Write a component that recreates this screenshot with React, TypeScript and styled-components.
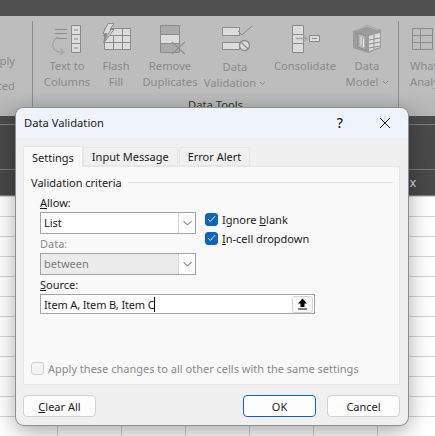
import React from "react";
import styled, { createGlobalStyle } from "styled-components";

const FONT = `"Noto Sans", "Open Sans", "Liberation Sans", sans-serif`;

const GlobalStyle = createGlobalStyle`
  html, body {
    margin: 0;
    padding: 0;
    background: #ffffff;
  }
  body {
    font-family: ${FONT};
    overflow: hidden;
  }
`;

const Page = styled.div`
  position: relative;
  width: 435px;
  height: 436px;
  overflow: hidden;
  display: flex;
  flex-direction: column;
`;

const TitleStrip = styled.div`
  height: 16px;
  background: #505050;
  flex: none;
`;

const Ribbon = styled.div`
  height: 100px;
  flex: none;
  display: flex;
  background: linear-gradient(#bdbdbd 75%, #b4b4b4 100%);
`;

const CutGroup = styled.div`
  width: 33px;
  flex: none;
  overflow: hidden;
  display: flex;
  justify-content: flex-end;
  padding-top: 27px;
  box-sizing: border-box;
  border-right: 1px solid #8c8c8c;
  margin: 5px 0 9px;
`;

const CutLabels = styled.div`
  width: 60px;
  flex: none;
  margin-right: 17px;
  text-align: right;
  font-size: 11.2px;
  line-height: 25px;
  color: #8a8a8a;
`;

const ToolsGroup = styled.div`
  position: relative;
  width: 366px;
  flex: none;
  display: flex;
  padding-left: 9px;
  box-sizing: border-box;
  border-right: 1px solid #8c8c8c;
  margin: 5px 0 9px;
`;

const ToolButton = styled.div<{ $width: number; $drop?: number }>`
  width: ${({ $width }) => $width}px;
  flex: none;
  display: flex;
  flex-direction: column;
  align-items: center;
  padding-top: 1px;
  svg {
    display: block;
    flex: none;
    margin-bottom: ${({ $drop }) => 2 + ($drop || 0)}px;
  }
`;

const ToolLabel = styled.div`
  font-size: 11.2px;
  line-height: 16px;
  color: #8a8a8a;
  white-space: nowrap;
`;

const Chevron = styled.svg`
  display: inline-block !important;
  margin: 0 0 1px 3px !important;
`;

const GroupName = styled.div`
  position: absolute;
  left: 0;
  right: 0;
  top: 76px;
  text-align: center;
  font-size: 11.2px;
  line-height: 16px;
  color: #333333;
`;

const CutRight = styled.div`
  flex: 1;
  overflow: hidden;
  padding: 6px 0 0 11px;
  svg {
    display: block;
    margin-bottom: 2px;
  }
`;

const SheetHeader = styled.div`
  height: 80px;
  flex: none;
  box-sizing: border-box;
  background: linear-gradient(#4a4a4a, #484848);
  display: flex;
  flex-direction: column;
`;

const HeaderBand = styled.div<{ $height: number }>`
  height: ${({ $height }) => $height}px;
  flex: none;
  box-sizing: border-box;
  border-bottom: 1px solid #7d7d7d;
  display: flex;
  align-items: center;
  justify-content: flex-end;
  padding-right: 19px;
  color: #d8e2ee;
  font-size: 12px;
`;

const Sheet = styled.div`
  flex: 1;
  background-color: #ffffff;
  background-image: linear-gradient(#d2d2d2 1px, transparent 1px),
    linear-gradient(90deg, #d2d2d2 1px, transparent 1px);
  background-size: 64px 20px;
  background-position: -7px 20px;
`;

const Dialog = styled.div`
  position: absolute;
  left: 16px;
  top: 108px;
  width: 392px;
  height: 317px;
  border-radius: 8px;
  background: #f0f0f0;
  box-shadow: 0 0 0 1px #8f8f8f, 0 6px 22px rgba(0, 0, 0, 0.36);
  display: flex;
  flex-direction: column;
  overflow: hidden;
  color: #1a1a1a;
  font-size: 11px;
`;

const DialogTitle = styled.div`
  height: 29px;
  flex: none;
  background: #eff3fb;
  display: flex;
  align-items: center;
  padding-left: 8px;
  font-size: 11.2px;
  color: #1c1c1c;
`;

const TitleText = styled.div`
  flex: 1;
`;

const HelpMark = styled.div`
  width: 20px;
  font-size: 14px;
  font-weight: 500;
  margin-right: 30px;
  text-align: center;
`;

const CloseMark = styled.div`
  width: 10px;
  height: 10px;
  margin-right: 18px;
  svg {
    display: block;
  }
`;

const TabRow = styled.div`
  display: flex;
  align-items: flex-end;
  height: 29px;
  flex: none;
  padding-left: 7px;
`;

const Tab = styled.div<{ $active?: boolean }>`
  box-sizing: border-box;
  height: ${({ $active }) => ($active ? 21 : 19)}px;
  padding: 0 8px;
  margin-right: ${({ $active }) => ($active ? 0 : 1)}px;
  display: flex;
  align-items: center;
  background: ${({ $active }) => ($active ? "#f9f9f9" : "#f0f0f0")};
  border: 1px solid #e6e6e6;
  border-bottom: ${({ $active }) => ($active ? "none" : "1px solid #e6e6e6")};
  border-radius: 2px 2px 0 0;
  position: relative;
  top: ${({ $active }) => ($active ? 1 : 0)}px;
  z-index: ${({ $active }) => ($active ? 1 : 0)};
`;

const Panel = styled.div`
  margin: 0 8px 0 7px;
  height: 219px;
  flex: none;
  box-sizing: border-box;
  background: #f9f9f9;
  border: 1px solid #e6e6e6;
  padding: 7px 6px 0 7px;
  display: flex;
  flex-direction: column;
`;

const Legend = styled.div`
  display: flex;
  align-items: center;
  gap: 6px;
  height: 16px;
  white-space: nowrap;
`;

const LegendRule = styled.div`
  flex: 1;
  height: 1px;
  background: #dfdfdf;
`;

const CriteriaRow = styled.div`
  display: flex;
  margin-top: 5px;
  padding-left: 9px;
`;

const CriteriaFields = styled.div`
  width: 156px;
  flex: none;
`;

const FieldLabel = styled.div<{ $dim?: boolean }>`
  height: 16px;
  line-height: 16px;
  margin-top: ${({ $dim }) => ($dim ? 2 : 0)}px;
  color: ${({ $dim }) => ($dim ? "#8a8a8a" : "#1a1a1a")};
  margin-bottom: 1px;
`;

const SelectBox = styled.div<{ $disabled?: boolean }>`
  box-sizing: border-box;
  width: 156px;
  height: 22px;
  display: flex;
  border: 1px solid #a4a4a8;
  background: ${({ $disabled }) => ($disabled ? "#ececec" : "#ffffff")};
  color: ${({ $disabled }) => ($disabled ? "#7c7c7c" : "#1a1a1a")};
`;

const SelectValue = styled.div`
  flex: 1;
  line-height: 20px;
  padding-left: 3px;
`;

const SelectCaret = styled.div`
  width: 16px;
  flex: none;
  display: flex;
  align-items: center;
  justify-content: center;
  background: #fdfdfd;
  border-left: 1px solid #d6d6d6;
`;

const CheckColumn = styled.div`
  display: flex;
  flex-direction: column;
  gap: 5px;
  padding: 17px 0 0 9px;
`;

const CheckRow = styled.div<{ $dim?: boolean }>`
  display: flex;
  align-items: center;
  gap: 4px;
  height: 14px;
  white-space: nowrap;
  color: ${({ $dim }) => ($dim ? "#8a8a8a" : "#1a1a1a")};
`;

const CheckBox = styled.div<{ $checked?: boolean }>`
  box-sizing: border-box;
  width: 13px;
  height: 13px;
  border-radius: 3px;
  flex: none;
  background: ${({ $checked }) => ($checked ? "#0a64c0" : "#f4f4f4")};
  border: 1px solid ${({ $checked }) => ($checked ? "#0a64c0" : "#cfcfcf")};
  display: flex;
  align-items: center;
  justify-content: center;
`;

const SourceBlock = styled.div`
  padding-left: 9px;
  margin-top: 2px;
`;

const SourceInput = styled.div`
  box-sizing: border-box;
  width: 275px;
  height: 20px;
  background: #ffffff;
  border: 1px solid #a4a4a8;
  display: flex;
  align-items: center;
  padding-left: 3px;
`;

const SourceText = styled.div`
  flex: 1;
  display: flex;
  align-items: center;
  white-space: nowrap;
  letter-spacing: -0.15px;
`;

const Caret = styled.span`
  width: 1px;
  height: 15px;
  background: #000000;
`;

const PickButton = styled.div`
  box-sizing: border-box;
  width: 21px;
  height: 17px;
  margin-right: 1px;
  border: 1px solid #d4d4d4;
  border-radius: 3px;
  background: #fdfdfd;
  display: flex;
  align-items: center;
  justify-content: center;
`;

const ApplyRow = styled(CheckRow)`
  margin-top: 47px;
`;

const DialogFooter = styled.div`
  display: flex;
  padding: 10px 8px 0 7px;
  gap: 11px;
`;

const Button = styled.div<{ $primary?: boolean; $push?: boolean }>`
  box-sizing: border-box;
  width: 73px;
  height: 22px;
  border-radius: 4px;
  background: #fdfdfd;
  border: 1px solid ${({ $primary }) => ($primary ? "#0a64c0" : "#d2d2d2")};
  display: flex;
  align-items: center;
  justify-content: center;
  margin-left: ${({ $push }) => ($push ? "auto" : "0")};
`;

const stroke = "#8b8b8b";
const pale = "#dcdcdc";
const mid = "#a6a6a6";

const TextToColumnsIcon = () => (
  <svg width="40" height="34" viewBox="47 22 40 34">
    <g fill="none" stroke={stroke}>
      <path d="M55 29.5h12M55 33.5h12M55 38.5h12" />
      <path d="M71.5 25.5h9v27h-9zM71.5 34.5h9M71.5 43.5h9" fill={pale} />
      <path d="M74 30h4M74 39h4M74 48h4" />
    </g>
    <path
      d="M58 37c-7 4-7 13 1 15l4 0M60 48l4 4-4 3"
      fill="none"
      stroke={mid}
      strokeWidth="1.3"
    />
  </svg>
);

const FlashFillIcon = () => (
  <svg width="40" height="34" viewBox="96 22 40 34">
    <path d="M104.5 28.5h26v21h-26z" fill={pale} stroke={stroke} />
    <path d="M103 35.5h27M103 42.5h27M113.5 35v14M122.5 28v21" stroke={stroke} fill="none" />
    <path d="M108 23.5h6l-4 6h4l-10 13 3-9h-4z" fill={pale} stroke={stroke} />
    <path d="M112 28l-8 13 2-8" fill="none" stroke={stroke} />
  </svg>
);

const RemoveDuplicatesIcon = () => (
  <svg width="40" height="34" viewBox="150 22 40 34">
    <path d="M160.5 25.5h19v9h-19z" fill="#aaaaaa" stroke={stroke} />
    <path d="M160.5 34.5h19v9h-19z" fill={pale} stroke={stroke} />
    <path d="M160.5 43.5h19v9h-19z" fill="#aaaaaa" stroke={stroke} />
    <path d="M172 42l13 12M185 42l-13 12" stroke="#8f8f8f" strokeWidth="1.1" fill="none" />
  </svg>
);

const DataValidationIcon = () => (
  <svg width="40" height="34" viewBox="215 22 40 34">
    <path d="M222.5 27.5h17v8h-17z" fill={pale} stroke={stroke} />
    <path d="M222.5 42.5h17v7h-17z" fill={pale} stroke={stroke} />
    <path d="M238 31l4 4 10-9" fill="none" stroke={stroke} />
    <circle cx="244.5" cy="45.5" r="5" fill={pale} stroke={stroke} strokeWidth="1.3" />
    <path d="M241 42l7 7" stroke={stroke} strokeWidth="1.3" />
  </svg>
);

const ConsolidateIcon = () => (
  <svg width="40" height="34" viewBox="285 22 40 34">
    <path d="M292.5 25.5h11v27h-11zM292.5 34.5h11M292.5 43.5h11" fill={pale} stroke={stroke} />
    <path d="M296 38.5h10M303 35l4 3.5-4 3.5" fill="none" stroke={mid} strokeWidth="1.3" />
    <path d="M309.5 35.5h10v6h-10z" fill={pale} stroke={stroke} />
    <path d="M312 38.5h5" stroke={stroke} />
  </svg>
);

const DataModelIcon = () => (
  <svg width="40" height="34" viewBox="347 22 40 34">
    <path d="M353 31l14-6 14 5v18l-13 5-15-5z" fill="#9c9c9c" />
    <path d="M358 33l8 3v14l-8-3z" fill="#b4b4b4" stroke="#8a8a8a" />
    <path d="M369 36l11-3v14l-11 4z" fill={pale} />
    <path d="M369 40l11-2M369 44l11-2M369 48l11-2M374 35v14" stroke="#8f8f8f" fill="none" />
    <path d="M361 37v8M363.5 39v8" stroke="#e6e6e6" />
    <path d="M356 30l11-4 11 4" stroke="#b8b8b8" fill="none" />
  </svg>
);

const WhatIfIcon = () => (
  <svg width="24" height="34" viewBox="421 22 24 34">
    <path d="M423.5 28.5h20v21h-20zM423.5 35.5h20M423.5 42.5h20M431.5 28v21" fill="none" stroke={stroke} />
  </svg>
);

const SmallCaret = () => (
  <svg width="9" height="6" viewBox="0 0 9 6">
    <path d="M0.5 1l4 4 4-4" fill="none" stroke="#5a5a5a" strokeWidth="1" />
  </svg>
);

const Tick = () => (
  <svg width="9" height="8" viewBox="0 0 9 8">
    <path d="M1 4.2l2.3 2.2L8 1.3" fill="none" stroke="#ffffff" strokeWidth="1" />
  </svg>
);

const UploadArrow = () => (
  <svg width="11" height="12" viewBox="0 0 11 12">
    <path d="M5.5 0.5L10 5.5H7.5V9h-4V5.5H1z" fill="#000000" />
    <path d="M1 11h9" stroke="#000000" strokeWidth="1.2" />
  </svg>
);

const tools = [
  { width: 50, icon: <TextToColumnsIcon />, lines: ["Text to", "Columns"] },
  { width: 48, icon: <FlashFillIcon />, lines: ["Flash", "Fill"] },
  { width: 60, icon: <RemoveDuplicatesIcon />, lines: ["Remove", "Duplicates"] },
  { width: 70, icon: <DataValidationIcon />, lines: ["Data", "Validation"], menu: true, drop: 1 },
  { width: 70, icon: <ConsolidateIcon />, lines: ["Consolidate"] },
  { width: 54, icon: <DataModelIcon />, lines: ["Data", "Model"], menu: true },
];

export default function App() {
  return (
    <>
      <GlobalStyle />
      <Page>
        <TitleStrip />
        <Ribbon>
          <CutGroup>
            <CutLabels>
              Reapply
              <br />
              Advanced
            </CutLabels>
          </CutGroup>
          <ToolsGroup>
            {tools.map((tool) => (
              <ToolButton key={tool.lines.join(" ")} $width={tool.width} $drop={tool.drop}>
                {tool.icon}
                {tool.lines.map((line, i) => (
                  <ToolLabel key={line}>
                    {line}
                    {tool.menu && i === tool.lines.length - 1 && (
                      <Chevron width="7" height="5" viewBox="0 0 7 5">
                        <path d="M1 1l2.5 2.5L6 1" fill="none" stroke="#8a8a8a" />
                      </Chevron>
                    )}
                  </ToolLabel>
                ))}
              </ToolButton>
            ))}
            <GroupName>Data Tools</GroupName>
          </ToolsGroup>
          <CutRight>
            <WhatIfIcon />
            <ToolLabel>What-If</ToolLabel>
            <ToolLabel>Analysis</ToolLabel>
          </CutRight>
        </Ribbon>
        <SheetHeader>
          <HeaderBand $height={9} />
          <HeaderBand $height={45} />
          <HeaderBand $height={26}>x</HeaderBand>
        </SheetHeader>
        <Sheet />
        <Dialog>
          <DialogTitle>
            <TitleText>Data Validation</TitleText>
            <HelpMark>?</HelpMark>
            <CloseMark>
              <svg width="10" height="10" viewBox="0 0 10 10">
                <path d="M0 0l10 10M10 0L0 10" stroke="#1a1a1a" strokeWidth="1" />
              </svg>
            </CloseMark>
          </DialogTitle>
          <TabRow>
            <Tab $active>Settings</Tab>
            <Tab>Input Message</Tab>
            <Tab>Error Alert</Tab>
          </TabRow>
          <Panel>
            <Legend>
              Validation criteria
              <LegendRule />
            </Legend>
            <CriteriaRow>
              <CriteriaFields>
                <FieldLabel>
                  <u>A</u>llow:
                </FieldLabel>
                <SelectBox>
                  <SelectValue>List</SelectValue>
                  <SelectCaret>
                    <SmallCaret />
                  </SelectCaret>
                </SelectBox>
                <FieldLabel $dim>Data:</FieldLabel>
                <SelectBox $disabled>
                  <SelectValue>between</SelectValue>
                  <SelectCaret>
                    <SmallCaret />
                  </SelectCaret>
                </SelectBox>
              </CriteriaFields>
              <CheckColumn>
                <CheckRow>
                  <CheckBox $checked>
                    <Tick />
                  </CheckBox>
                  <span>
                    Ignore <u>b</u>lank
                  </span>
                </CheckRow>
                <CheckRow>
                  <CheckBox $checked>
                    <Tick />
                  </CheckBox>
                  <span>
                    <u>I</u>n-cell dropdown
                  </span>
                </CheckRow>
              </CheckColumn>
            </CriteriaRow>
            <SourceBlock>
              <FieldLabel>
                <u>S</u>ource:
              </FieldLabel>
              <SourceInput>
                <SourceText>
                  Item A, Item B, Item C
                  <Caret />
                </SourceText>
                <PickButton>
                  <UploadArrow />
                </PickButton>
              </SourceInput>
            </SourceBlock>
            <ApplyRow $dim>
              <CheckBox />
              <span>Apply these changes to all other cells with the same settings</span>
            </ApplyRow>
          </Panel>
          <DialogFooter>
            <Button>
              <span>
                <u>C</u>lear All
              </span>
            </Button>
            <Button $primary $push>
              OK
            </Button>
            <Button>Cancel</Button>
          </DialogFooter>
        </Dialog>
      </Page>
    </>
  );
}
